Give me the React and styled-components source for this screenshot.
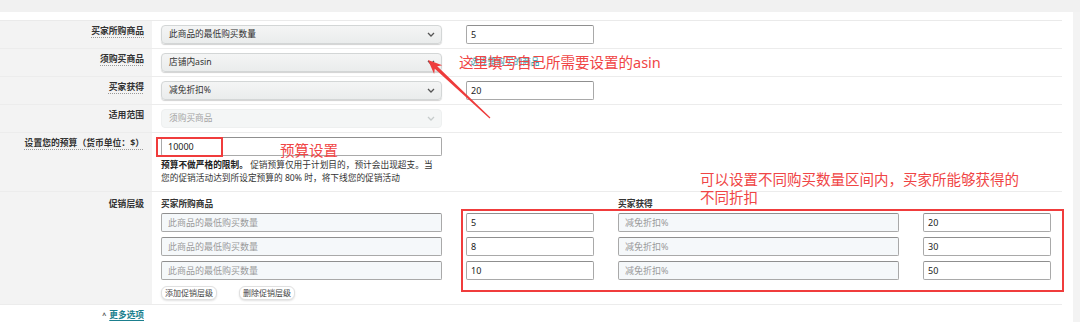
import React from 'react';
import styled, { createGlobalStyle } from 'styled-components';

const GlobalStyle = createGlobalStyle`
  html, body {
    margin: 0;
    padding: 0;
    background: #ffffff;
  }
  body {
    font-family: "Noto Sans", "Noto Sans CJK SC", sans-serif;
    color: #333;
  }
`;

const Chevron = ({ light }) => (
  <svg width="8" height="5" viewBox="0 0 8 5">
    <path d="M1 1 L4 4 L7 1" fill="none" stroke={light ? '#c6cccc' : '#555'} strokeWidth="1.3" />
  </svg>
);

const App = () => {
  return (
    <Page>
      <GlobalStyle />
      <TopBand />
      <Body>
        <Form>
          <Table>
            <Row>
              <Label dotted>买家所购商品</Label>
              <Cell>
                <Line>
                  <SelectBox>
                    <span>此商品的最低购买数量</span>
                    <Chevron />
                  </SelectBox>
                  <TextInput readOnly defaultValue="5" />
                </Line>
              </Cell>
            </Row>
            <Row>
              <Label dotted>须购买商品</Label>
              <Cell>
                <Line>
                  <SelectBox>
                    <span>店铺内asin</span>
                    <Chevron />
                  </SelectBox>
                  <HiddenLink>选择需购买的商品</HiddenLink>
                </Line>
              </Cell>
            </Row>
            <Row>
              <Label dotted>买家获得</Label>
              <Cell>
                <Line>
                  <SelectBox>
                    <span>减免折扣%</span>
                    <Chevron />
                  </SelectBox>
                  <TextInput readOnly defaultValue="20" />
                </Line>
              </Cell>
            </Row>
            <Row>
              <Label>适用范围</Label>
              <Cell>
                <SelectBox disabled>
                  <span>须购买商品</span>
                  <Chevron light />
                </SelectBox>
              </Cell>
            </Row>
            <Row>
              <Label dotted>设置您的预算（货币单位：$）</Label>
              <Cell bottom={6}>
                <WideInput readOnly defaultValue="10000" />
                <Help>
                  <b>预算不做严格的限制。</b> 促销预算仅用于计划目的，预计会出现超支。当
                  <br />
                  您的促销活动达到所设定预算的 80% 时，将下线您的促销活动
                </Help>
              </Cell>
            </Row>
            <Row>
              <Label top={6}>促销层级</Label>
              <Cell top={6}>
                <TierGrid>
                  <TierHead>买家所购商品</TierHead>
                  <span />
                  <TierHead>买家获得</TierHead>
                  <span />
                  {['5', '8', '10'].map((qty, i) => (
                    <React.Fragment key={qty}>
                      <TierInput readOnly placeholder="此商品的最低购买数量" />
                      <TextInput readOnly defaultValue={qty} />
                      <TierInput readOnly placeholder="减免折扣%" />
                      <TextInput readOnly defaultValue={['20', '30', '50'][i]} />
                    </React.Fragment>
                  ))}
                </TierGrid>
                <Buttons>
                  <SmallButton>添加促销层级</SmallButton>
                  <SmallButton>删除促销层级</SmallButton>
                </Buttons>
              </Cell>
            </Row>
          </Table>
          <MoreRow>
            <MoreLink>
              <Caret>^</Caret>
              <u>更多选项</u>
            </MoreLink>
          </MoreRow>
        </Form>
        <ScrollStrip />
      </Body>

      {/* screenshot annotations */}
      <Arrow width="1080" height="322" viewBox="0 0 1080 322">
        <polygon
          points="428,60 442.3,65.2 437.2,66.2 490.4,117.5 489.6,118.5 434.8,68.8 434.1,74"
          fill="#ee3b3b"
        />
      </Arrow>
      <Note top={53} left={459}>这里填写自己所需要设置的asin</Note>
      <Note top={141} left={280}>预算设置</Note>
      <Note top={170} left={700}>
        可以设置不同购买数量区间内，买家所能够获得的
        <br />
        不同折扣
      </Note>
      <RedBox top={137} left={156} width={67} height={20} />
      <RedBox top={209} left={461} width={603} height={83} />
    </Page>
  );
};

const Page = styled.div`
  position: relative;
  width: 1080px;
  height: 322px;
  overflow: hidden;
  font-size: 8.7px;
  line-height: 13px;
`;

const TopBand = styled.div`
  height: 12px;
  background: #f1f1f1;
`;

const Body = styled.div`
  display: flex;
  padding-top: 8px;
`;

const Form = styled.div`
  width: 1062px;
`;

const ScrollStrip = styled.div`
  margin-left: 11px;
  width: 7px;
  height: 310px;
  margin-top: -8px;
  background: #f3f3f3;
`;

const Table = styled.div`
  border-top: 1px solid #eaeaea;
`;

const Row = styled.div`
  display: grid;
  grid-template-columns: 152px 1fr;
  border-bottom: 1px solid #ececec;
`;

const Label = styled.div`
  background: #f3f3f3;
  text-align: right;
  padding: ${(p) => p.top || 4}px 8px 0 0;
  font-weight: 700;
  color: #333;
  font-size: 8.8px;
  text-decoration: ${(p) => (p.dotted ? 'underline dotted #999' : 'none')};
  text-underline-offset: 3px;
`;

const Cell = styled.div`
  padding: ${(p) => p.top || 4}px 0 ${(p) => p.bottom || 4}px 9px;
`;

const Line = styled.div`
  display: flex;
  align-items: center;
  gap: 24px;
`;

const SelectBox = styled.div`
  box-sizing: border-box;
  width: 281px;
  height: 19px;
  display: flex;
  align-items: center;
  justify-content: space-between;
  padding: 0 6px 0 7px;
  border-radius: 4px;
  color: ${(p) => (p.disabled ? '#a5a5a5' : '#333')};
  background: ${(p) => (p.disabled ? '#f4f6f6' : 'linear-gradient(#f4f5f5, #eaecec)')};
  border: 1px solid ${(p) => (p.disabled ? '#eef0f0' : '#d3d6d6')};
  box-shadow: ${(p) => (p.disabled ? 'none' : '0 1px 1px rgba(0,0,0,0.18)')};
`;

const TextInput = styled.input`
  box-sizing: border-box;
  width: 128px;
  height: 19px;
  margin: 0;
  padding: 0 4px;
  font: inherit;
  font-size: 9px;
  color: #222;
  background: #fff;
  border: 1px solid #a9a9a9;
  border-top-color: #8f8f8f;
  border-radius: 2px;
  outline: none;
`;

const WideInput = styled(TextInput)`
  display: block;
  width: 281px;
  padding-left: 6px;
`;

const HiddenLink = styled.span`
  color: #2a8f9e;
  margin-left: 4px;
`;

const Help = styled.div`
  margin-top: 3px;
  color: #333;

  b {
    color: #222;
  }
`;

const TierGrid = styled.div`
  display: grid;
  grid-template-columns: 281px 128px 281px 128px;
  column-gap: 24px;
  row-gap: 5px;
`;

const TierHead = styled.div`
  font-weight: 700;
  margin: 0 0 -3px;
`;

const TierInput = styled(TextInput)`
  width: 281px;
  padding-left: 6px;
  background: #f5f8fa;
  &::placeholder {
    color: #9a9a9a;
  }
`;

const Buttons = styled.div`
  display: flex;
  gap: 22px;
  margin-top: 6px;
`;

const SmallButton = styled.div`
  box-sizing: border-box;
  height: 14px;
  padding: 0 3px;
  line-height: 12px;
  font-size: 8px;
  color: #444;
  background: #fff;
  border: 1px solid #e0e0e0;
  border-radius: 6px;
  box-shadow: 0 1px 2px rgba(0, 0, 0, 0.12);
`;

const MoreRow = styled.div`
  width: 144px;
  text-align: right;
  padding-top: 4px;
`;

const MoreLink = styled.span`
  color: #1b7f8e;
  font-weight: 700;

  u {
    text-underline-offset: 2px;
  }
`;

const Caret = styled.span`
  color: #555;
  font-size: 7px;
  margin-right: 3px;
`;

const Arrow = styled.svg`
  position: absolute;
  left: 0;
  top: 0;
  pointer-events: none;
`;

const Note = styled.div`
  position: absolute;
  top: ${(p) => p.top}px;
  left: ${(p) => p.left}px;
  font-size: 14.5px;
  line-height: 18px;
  color: #f04545;
  white-space: nowrap;
`;

const RedBox = styled.div`
  position: absolute;
  top: ${(p) => p.top}px;
  left: ${(p) => p.left}px;
  width: ${(p) => p.width}px;
  height: ${(p) => p.height}px;
  box-sizing: border-box;
  border: 2px solid #f03c3c;
`;

export default App;
